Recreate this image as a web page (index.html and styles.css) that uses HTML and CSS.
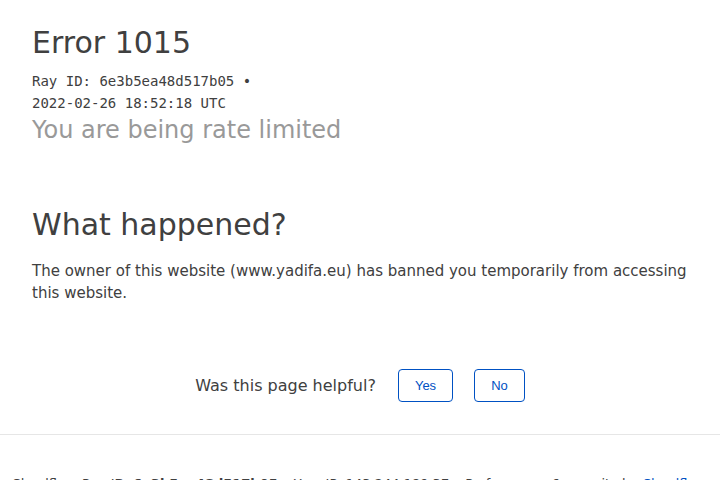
FILE: index.html
```html
<!DOCTYPE html>
<html lang="en">
<head>
<meta charset="utf-8">
<title>Error 1015 | Cloudflare</title>
<link rel="stylesheet" href="styles.css">
</head>
<body>
<main class="wrapper">
  <header class="error-header">
    <h1 class="error-title">Error 1015</h1>
    <div class="ray-id">
      <span class="ray-line">Ray ID: 6e3b5ea48d517b05 &bull;</span>
      <span class="ray-line">2022-02-26 18:52:18 UTC</span>
    </div>
    <h2 class="error-subtitle">You are being rate limited</h2>
  </header>
  <section class="overview">
    <h2 class="section-title">What happened?</h2>
    <p class="section-text">The owner of this website (www.yadifa.eu) has banned you temporarily from accessing this website.</p>
  </section>
</main>
<section class="feedback">
  <span class="feedback-question">Was this page helpful?</span>
  <button class="feedback-button" type="button">Yes</button>
  <button class="feedback-button" type="button">No</button>
</section>
<footer class="footer">
  <span class="footer-item">Cloudflare Ray ID: <strong class="footer-strong">6e3b5ea48d517b05</strong></span>
  <span class="footer-sep">&bull;</span>
  <span class="footer-item">Your IP: 143.244.189.37</span>
  <span class="footer-sep">&bull;</span>
  <span class="footer-item">Performance &amp; security by <a class="footer-link" href="#">Cloudflare</a></span>
</footer>
</body>
</html>
```

FILE: styles.css
```css
html, body {
  margin: 0;
  padding: 0;
  background: #ffffff;
}

body {
  font-family: "DejaVu Sans", sans-serif;
  color: #404040;
  overflow: hidden;
}

.wrapper {
  padding: 25px 32px 0;
}

.error-header {
  display: flex;
  flex-direction: column;
}

.error-title {
  margin: 0;
  font-size: 30px;
  line-height: 36px;
  font-weight: 400;
  color: #404040;
}

.ray-id {
  display: flex;
  flex-direction: column;
  margin-top: 9px;
  font-family: "DejaVu Sans Mono", monospace;
  font-size: 14px;
  line-height: 22px;
  color: #404040;
}

.error-subtitle {
  margin: 1px 0 0;
  font-size: 24px;
  line-height: 30px;
  font-weight: 400;
  color: #999999;
}

.overview {
  margin-top: 62px;
}

.section-title {
  margin: 0;
  font-size: 30px;
  line-height: 36px;
  font-weight: 400;
  color: #404040;
}

.section-text {
  margin: 17px 0 0;
  font-size: 15px;
  line-height: 22px;
  color: #404040;
}

.feedback {
  display: flex;
  justify-content: center;
  align-items: center;
  gap: 21px;
  margin-top: 65px;
  height: 33px;
}

.feedback-question {
  font-size: 16px;
  line-height: 20px;
  color: #404040;
  margin-right: 1px;
}

.feedback-button {
  height: 33px;
  padding: 0 16px;
  border: 1px solid #0051c3;
  border-radius: 4px;
  background: #ffffff;
  color: #0051c3;
  font-family: "Liberation Sans", Arial, sans-serif;
  font-size: 13px;
  cursor: pointer;
}

.footer {
  margin-top: 32px;
  border-top: 1px solid #e6e6e6;
  padding-top: 39px;
  text-align: center;
  font-size: 13px;
  line-height: 20px;
  color: #404040;
}

.footer-strong {
  font-weight: 700;
}

.footer-link {
  color: #0051c3;
  text-decoration: none;
}
```
